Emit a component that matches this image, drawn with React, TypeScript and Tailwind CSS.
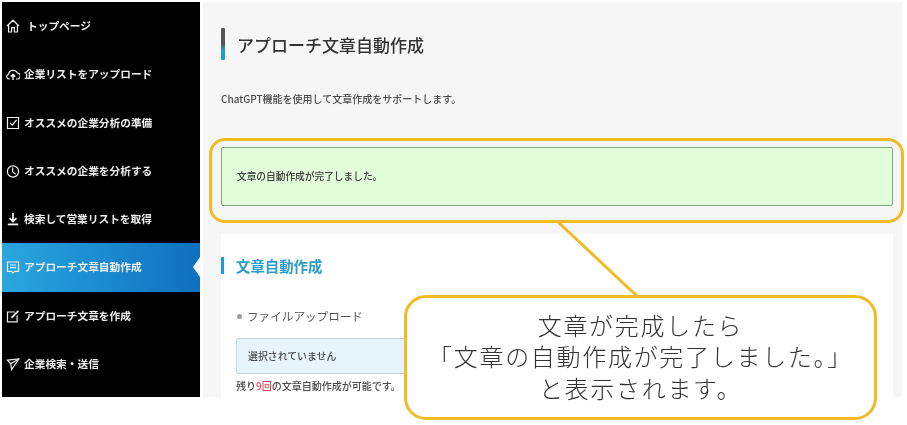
import type { ReactNode } from 'react';

const Icon = ({ children }: { children: ReactNode }) => (
  <svg viewBox="0 0 14 14" className="w-[14px] h-[14px] shrink-0" fill="none" stroke="currentColor" strokeWidth="1.2">
    {children}
  </svg>
);

const navItems = [
  {
    label: 'トップページ',
    extra: 'ml-[3px]',
    icon: (
      <Icon>
        <path d="M1 7 7 1.2 13 7M2.6 5.8V13h3V8.6h2.8V13h3V5.8" />
      </Icon>
    ),
  },
  {
    label: '企業リストをアップロード',
    extra: '',
    icon: (
      <Icon>
        <path d="M4 12H3a2.4 2.4 0 0 1-.6-4.7A4.8 4.8 0 0 1 11.4 6 3 3 0 0 1 11 12h-1" />
        <path d="M7 13V7.5M4.8 9.6 7 7.4l2.2 2.2" strokeWidth="1.5" />
      </Icon>
    ),
  },
  {
    label: 'オススメの企業分析の準備',
    extra: '',
    icon: (
      <Icon>
        <path d="M1.5 1.5h11v11h-11z" />
        <path d="M4 6.8 6.3 9.2 10.5 4" />
      </Icon>
    ),
  },
  {
    label: 'オススメの企業を分析する',
    extra: '',
    icon: (
      <Icon>
        <circle cx="7" cy="7.5" r="5.6" />
        <path d="M6.6 3.4v4.3l3 2.6" />
      </Icon>
    ),
  },
  {
    label: '検索して営業リストを取得',
    extra: '',
    icon: (
      <Icon>
        <path d="M7 1v8.5M3.6 6.2 7 9.6l3.4-3.4" strokeWidth="1.8" />
        <path d="M1.8 12.4h10.4" strokeWidth="1.8" />
      </Icon>
    ),
  },
  {
    label: 'アプローチ文章自動作成',
    extra: '',
    active: true,
    icon: (
      <Icon>
        <path d="M1.5 2h11v9.4H8.6L7 13l-1.6-1.6H1.5z" />
        <path d="M4 5h6M4 7.6h6" />
      </Icon>
    ),
  },
  {
    label: 'アプローチ文章を作成',
    extra: '',
    icon: (
      <Icon>
        <path d="M9 3H1.5v9.8h9.6V6.5" />
        <path d="M5.4 8.8 12.4 1.8" strokeWidth="1.9" />
      </Icon>
    ),
  },
  {
    label: '企業検索・送信',
    extra: '',
    icon: (
      <Icon>
        <path d="M1.5 3.2 12.8 2 5.6 12.6 4.8 6.8z" />
        <path d="M4.8 6.8 12.8 2" />
      </Icon>
    ),
  },
];

const App = () => {
  return (
    <div className="relative w-[907px] h-[425px] overflow-hidden bg-white font-['Noto_Sans_CJK_JP','Noto_Sans',sans-serif] blur-[0.3px]">
      <div className="flex h-[397px] pt-[2px] pl-[2px] pr-[5px]">
        {/* Sidebar */}
        <nav className="w-[198px] shrink-0 bg-black flex flex-col pb-[9px]">
          {navItems.map((item) => (
            <div
              key={item.label}
              className={`relative flex-1 flex items-center gap-[4px] pl-[4px] text-[10.7px] font-bold text-[#eeeeee] ${
                item.active ? 'bg-gradient-to-r from-[#2aa7dd] to-[#0f6fc0]' : ''
              }`}
            >
              {item.icon}
              <span className={item.extra}>{item.label}</span>
              {item.active && (
                <div className="absolute right-0 top-[14px] w-0 h-0 border-y-[10px] border-y-transparent border-r-[7px] border-r-[#f6f6f6]" />
              )}
            </div>
          ))}
        </nav>

        {/* Main */}
        <main className="flex-1 ml-[3px] bg-[#f6f6f6] pl-[18px] pr-[9px] overflow-hidden">
          <div className="mt-[26px] h-[32px] flex items-stretch gap-[12px]">
            <div className="w-[4px] rounded-[1px] bg-gradient-to-b from-[#555555] from-50% to-[#1f9cc9] to-70%" />
            <h1 className="pt-[2px] flex items-center text-[17px] font-medium text-[#333333]">アプローチ文章自動作成</h1>
          </div>
          <p className="mt-[31px] text-[10px] leading-[16px] font-medium text-[#4a4a4a]">ChatGPT機能を使用して文章作成をサポートします。</p>
          <div className="mt-[40px] h-[59px] bg-[#e2fdd9] border border-[#7fa97c] rounded-[2px] flex items-center pl-[15px] text-[9.7px] font-medium text-[#3a3a3a]">
            文章の自動作成が完了しました。
          </div>
          <section className="mt-[28px] bg-white h-[200px] pt-[23px]">
            <div className="h-[17px] border-l-[3px] border-[#1f9cc9] pl-[12px] flex items-center text-[14.4px] font-bold text-[#2a9dc9]">
              文章自動作成
            </div>
            <div className="mt-[34px] pl-[15px] flex items-center gap-[5px] text-[11.6px] leading-[16px] text-[#555555]">
              <span className="w-[5px] h-[5px] ml-[1px] rounded-full bg-[#999999]" />
              ファイルアップロード
            </div>
            <div className="mt-[14px] ml-[15px] mr-[20px] h-[36px] bg-[#e6f4fb] border border-[#c9d2d8] rounded-[3px] flex items-center pl-[11px] text-[9.9px] font-medium text-[#4a4a4a]">
              選択されていません
            </div>
            <p className="mt-[4px] ml-[15px] text-[10px] leading-[15px] font-medium text-[#4a4a4a]">
              残り<span className="text-[#e0475c]">9回</span>の文章自動作成が可能です。
            </p>
          </section>
        </main>
      </div>

      {/* Annotation overlay */}
      <div className="absolute left-[209px] top-[138px] w-[695px] h-[85px] border-[3px] border-[#f1bb25] rounded-[16px]" />
      <svg className="absolute left-0 top-0 w-[907px] h-[425px] pointer-events-none" viewBox="0 0 907 425">
        <path d="M558 222 638 297" stroke="#f1bb25" strokeWidth="3" fill="none" />
      </svg>
      <div className="absolute left-[404px] top-[295px] w-[473px] h-[125px] pb-[3px] bg-white border-[3px] border-[#f1bb25] rounded-[22px] flex flex-col items-center justify-center text-[24px] leading-[31.5px] text-[#333333] font-light tracking-[1.7px]">
        <span>文章が完成したら</span>
        <span>「文章の自動作成が完了しました。」</span>
        <span>と表示されます。</span>
      </div>
    </div>
  );
};

export default App;
